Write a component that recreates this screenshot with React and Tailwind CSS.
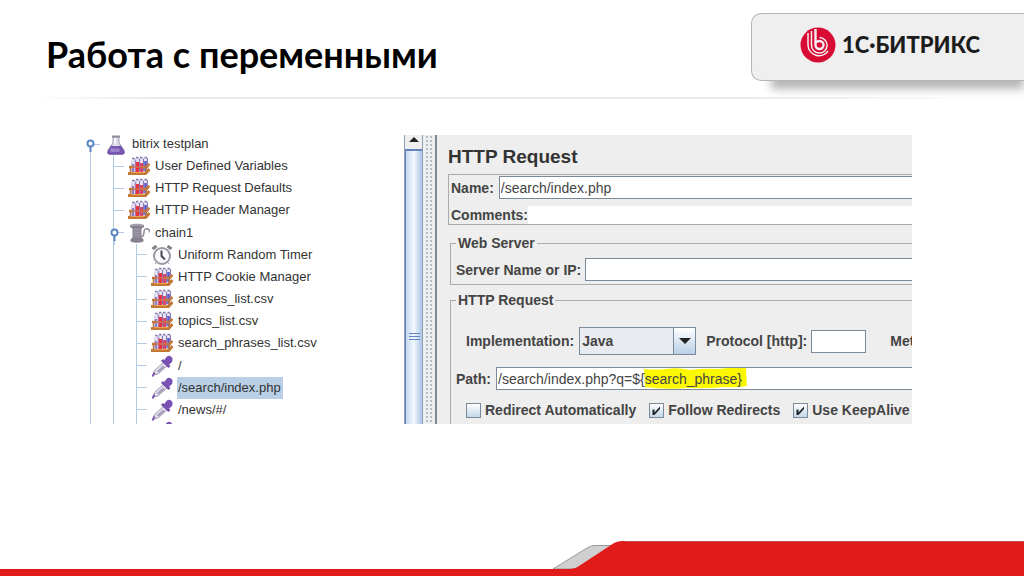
import React from "react";

const TREE = [
  { depth: 1, icon: "tubes", label: "User Defined Variables" },
  { depth: 1, icon: "tubes", label: "HTTP Request Defaults" },
  { depth: 1, icon: "tubes", label: "HTTP Header Manager" },
  { depth: 1, icon: "spool", label: "chain1", open: true },
  { depth: 2, icon: "timer", label: "Uniform Random Timer" },
  { depth: 2, icon: "tubes", label: "HTTP Cookie Manager" },
  { depth: 2, icon: "tubes", label: "anonses_list.csv" },
  { depth: 2, icon: "tubes", label: "topics_list.csv" },
  { depth: 2, icon: "tubes", label: "search_phrases_list.csv" },
  { depth: 2, icon: "pipette", label: "/" },
  { depth: 2, icon: "pipette", label: "/search/index.php", selected: true },
  { depth: 2, icon: "pipette", label: "/news/#/" },
];

function FlaskIcon() {
  return (
    <svg viewBox="0 0 22 20" className="h-5 w-[22px]">
      <path d="M8 2v6L3 15q-1.500 4 1.500 4.500h13q3-.5 1.500-4.500L14 8V2z" fill="#dedde8" stroke="#a3a1b3" />
      <path d="M6 10.500q5 1.500 10 0l3 5q1.500 3.500-1.500 4h-13q-3-.5-1.500-4z" fill="#7455b0" />
      <path d="M6 12.500q4 2 8 .5l1 3.500q-5 1.500-10 0z" fill="#9c84cd" />
      <path d="M7 1.500h8" stroke="#8d8c98" strokeWidth="2" />
      <path d="M10 3v6" stroke="#fff" strokeWidth="1.500" />
    </svg>
  );
}

function TubesIcon() {
  return (
    <svg viewBox="0 0 22 20" className="h-5 w-[22px]">
      <path d="M3 5l3-3h13v14H3z" fill="#d3cce4" />
      <path d="M5.500 4v11M9.500 3v12M13.500 3v12M17.500 3v12" stroke="#efebf6" strokeWidth="2" />
      <path d="M7.500 4v12" stroke="#9e8fc4" strokeWidth="1.500" />
      <path d="M5 8v8" stroke="#8b7fc6" strokeWidth="2" />
      <path d="M9.500 6v10" stroke="#e8323f" strokeWidth="3.500" />
      <path d="M13.500 7v9" stroke="#d8486d" strokeWidth="3" />
      <path d="M17.500 5v10" stroke="#5a58c8" strokeWidth="2.500" />
      <path d="M11.500 3v12M15.500 3v12M19.500 2v10" stroke="#857bb4" />
      <path d="M4 2.500h2.500M8 1.500h2.500M12 1.500h2.500M16.500 1.500H19" stroke="#857dae" strokeWidth="1.500" />
      <path d="M1 11h4M15 11h3.500l3-3" stroke="#c77a36" strokeWidth="2.500" fill="none" />
      <path d="M5 11h10" stroke="#d07050" strokeWidth="1.500" />
      <path d="M0 17.500h17.500l4-4.500" stroke="#c47833" strokeWidth="3" fill="none" />
      <path d="M1.500 16.500h15" stroke="#e9a552" />
      <path d="M2.500 10v7M18 10v7" stroke="#b9744a" strokeWidth="1.500" />
    </svg>
  );
}

function SpoolIcon() {
  return (
    <svg viewBox="0 0 22 20" className="h-5 w-[22px]">
      <path d="M2 2q7-2.500 14 0v2l-2.500 1.500v9l2 2v2q-7 2.500-13 0v-2l2-2v-9L2 4z" fill="#85808e" />
      <path d="M5.500 5.500h7v9h-7z" fill="#9b95a6" />
      <path d="M5.500 8h7M5.500 10.500h7M5.500 13h7" stroke="#8a8496" />
      <path d="M3 2.500q6-1.500 12 0" fill="none" stroke="#bcb9c2" />
      <path d="M13 14q3-1 3-5t4-3q2 1 1.500 3.500" fill="none" stroke="#8d8896" strokeWidth="1.500" />
    </svg>
  );
}

function TimerIcon() {
  return (
    <svg viewBox="0 0 22 20" className="h-5 w-[22px]">
      <path d="M1.500 4l4-3M16.500 1l4 3" stroke="#84828c" strokeWidth="3" />
      <path d="M4 3l3 3M18 3l-3 3M6 17l-2 2M16 17l2 2" stroke="#9a99a3" />
      <circle cx="11" cy="11" r="8" fill="#fbfbfd" stroke="#9b99a5" strokeWidth="2" />
      <path d="M10.500 5.500V11l3.500 3.500" fill="none" stroke="#4a4858" strokeWidth="2" />
    </svg>
  );
}

function PipetteIcon() {
  return (
    <svg viewBox="0 0 22 22" className="h-[22px] w-[22px]">
      <path d="M2 20l2-5 9-8 3.500 3.500L7 19z" fill="#e3e1ea" stroke="#a29fad" />
      <path d="M5.500 16.500l6.500-6 2 2-6 5z" fill="#a9a0c0" />
      <path d="M1.500 21.500l2-4" stroke="#7c56b5" strokeWidth="2" />
      <path d="M11 5l7.500 7" stroke="#7350ad" strokeWidth="3" />
      <path d="M12.500 6l3-4q3-2.500 5.500.5 1.500 3-1 5.500L17 10.500z" fill="#7951b3" />
    </svg>
  );
}

const ICONS = {
  flask: FlaskIcon,
  tubes: TubesIcon,
  spool: SpoolIcon,
  timer: TimerIcon,
  pipette: PipetteIcon,
};

function Handle() {
  return (
    <svg viewBox="0 0 9 14" className="absolute top-1/2 -left-1 h-[14px] w-[9px] -translate-y-1 overflow-visible">
      <path d="M4.500 6v10" stroke="#b4cbe6" />
      <path d="M4.500 6v6" stroke="#5d87c4" strokeWidth="2" />
      <circle cx="4.500" cy="3.500" r="3" fill="#fff" stroke="#5d87c4" strokeWidth="2" />
    </svg>
  );
}

function TreeRow({ depth, icon, label, open, selected }) {
  const Icon = ICONS[icon];
  return (
    <li className="flex items-stretch">
      {Array.from({ length: depth }, (_, i) => (
        <span key={i} className="w-[23px] shrink-0 border-l border-[#b4cbe6]" />
      ))}
      <span className="relative flex w-[15px] shrink-0 items-center border-l border-[#b4cbe6]">
        <span className="h-px w-[10px] bg-[#b4cbe6]" />
        {open && <Handle />}
      </span>
      <span className="flex w-[22px] shrink-0 items-center">
        <Icon />
      </span>
      <span
        className={
          selected
            ? "ml-1 flex items-center bg-[#b8cfe5] pr-[2px] pl-px whitespace-nowrap"
            : "ml-[5px] flex items-center whitespace-nowrap"
        }
      >
        {label}
      </span>
    </li>
  );
}

function TestPlanTree() {
  return (
    <div className="flex w-[324px] shrink-0 flex-col overflow-hidden pl-[10px] text-[13px] leading-4 text-[#333]">
      <div className="flex h-5 shrink-0 items-stretch">
        <span className="relative mb-[2px] flex w-[15px] shrink-0 items-center">
          <span className="h-px w-[10px] bg-[#b4cbe6]" />
          <Handle />
        </span>
        <span className="flex w-[22px] items-center">
          <FlaskIcon />
        </span>
        <span className="mb-[2px] ml-[5px] flex items-center">bitrix testplan</span>
      </div>
      <ul className="grid h-[266px] shrink-0 auto-rows-fr">
        {TREE.map((node) => (
          <TreeRow key={node.label} {...node} />
        ))}
      </ul>
      <ul className="h-[22px] shrink-0">
        <TreeRow depth={2} icon="pipette" label="" />
      </ul>
    </div>
  );
}

function Scrollbar() {
  return (
    <div className="flex w-[19px] shrink-0 flex-col border-x border-[#8ea0b8] bg-[#eee]">
      <button type="button" aria-label="Scroll up" className="flex h-[14px] items-start justify-center pt-[2px]">
        <svg viewBox="0 0 10 5" className="h-[5px] w-[10px]">
          <path d="M0 5l5-5 5 5z" fill="#222" />
        </svg>
      </button>
      <div className="flex flex-1 flex-col items-center border-t-2 border-l border-[#6382bf] bg-linear-to-r from-[#c4d8ef] via-[#f3f8fd] to-[#a9c4e4] pt-[182px]">
        <div className="h-px w-[11px] bg-[#6382bf]" />
        <div className="mt-[2px] h-px w-[11px] bg-[#6382bf]" />
        <div className="mt-[2px] h-px w-[11px] bg-[#6382bf]" />
      </div>
    </div>
  );
}

function CheckOption({ label, checked }) {
  return (
    <label className="flex items-center gap-1">
      <span className="relative flex">
        <input
          type="checkbox"
          defaultChecked={checked}
          className="peer h-[15px] w-[15px] appearance-none border border-[#7a8a99] bg-linear-to-b from-white to-[#c3d7ea]"
        />
        <svg viewBox="0 0 15 15" className="pointer-events-none absolute inset-0 hidden peer-checked:block">
          <path d="M3.500 6.500h2v3l5.500-6v2.500l-5.500 6h-2z" fill="#222" />
        </svg>
      </span>
      {label}
    </label>
  );
}

function RequestPanel() {
  const field = "h-[23px] border border-[#7a8a99] bg-white px-px text-[14px] font-normal text-[#444] outline-none";
  return (
    <section className="min-w-0 flex-1 overflow-hidden border-l-2 border-[#7a8a99] bg-[#eee] pl-[11px] text-[14px] leading-4 font-bold whitespace-nowrap text-[#444]">
      <h2 className="mt-[10px] text-[19px] leading-6 text-[#333]">HTTP Request</h2>
      <div className="mt-[5px] border-y border-l border-[#aaa]">
        <div className="flex items-center gap-[5px] pt-px pl-[2px]">
          <label htmlFor="name">Name:</label>
          <input id="name" defaultValue="/search/index.php" className={`${field} min-w-0 flex-1 border-r-0`} />
        </div>
        <div className="mt-[7px] flex items-center pl-[2px]">
          <label htmlFor="comments">Comments:</label>
          <input id="comments" className="h-[18px] min-w-0 flex-1 bg-white outline-none" />
        </div>
      </div>

      <fieldset className="mt-[10px] ml-[2px] h-[50px] border border-r-0 border-[#aaa] pl-[5px]">
        <legend className="px-[2px]">Web Server</legend>
        <div className="mt-[7px] flex items-center gap-1">
          <label htmlFor="server">Server Name or IP:</label>
          <input id="server" className={`${field} min-w-0 flex-1 border-r-0`} />
        </div>
      </fieldset>

      <fieldset className="mt-[7px] ml-[2px] h-40 border border-r-0 border-[#aaa] pl-[5px]">
        <legend className="px-[2px]">HTTP Request</legend>
        <div className="mt-[19px] flex items-center pl-[10px]">
          <label htmlFor="impl">Implementation:</label>
          <div className="relative ml-[5px]">
            <select
              id="impl"
              className="block h-7 w-[117px] appearance-none border border-[#7a8a99] bg-[#e8ebf0] px-[2px] font-bold"
            >
              <option>Java</option>
            </select>
            <span className="pointer-events-none absolute inset-y-0 right-0 flex w-[23px] items-center justify-center border border-[#7a8a99] bg-linear-to-b from-white to-[#b8cfe5]">
              <svg viewBox="0 0 12 6" className="h-[6px] w-3">
                <path d="M0 0h12L6 6z" fill="#222" />
              </svg>
            </span>
          </div>
          <label htmlFor="protocol" className="ml-[10px]">Protocol [http]:</label>
          <input id="protocol" className={`${field} ml-1 w-[55px] shrink-0`} />
          <span className="ml-6">Met</span>
        </div>
        <div className="mt-3 flex items-center gap-[5px]">
          <label htmlFor="path">Path:</label>
          <div className="relative flex min-w-0 flex-1 bg-white">
            <svg viewBox="0 0 104 24" className="absolute top-0 left-[148px] h-6 w-[104px]">
              <path d="M0 2q10 1 22 0 12-2 24 1 14-2 28-1 16-2 28-1l1 18q-10 2-24 1-16 2-34 1-22 2-44-1z" fill="#fcf800" />
            </svg>
            <input
              id="path"
              defaultValue="/search/index.php?q=${search_phrase}"
              className="relative h-[23px] w-full border border-r-0 border-[#7a8a99] bg-transparent px-px text-[14px] font-normal text-[#444] outline-none"
            />
          </div>
        </div>
        <div className="mt-3 flex items-center gap-[13px] pl-[10px]">
          <CheckOption label="Redirect Automatically" />
          <CheckOption label="Follow Redirects" checked />
          <CheckOption label="Use KeepAlive" checked />
        </div>
      </fieldset>
    </section>
  );
}

function BrandPanel() {
  return (
    <div className="relative mt-[13px] w-[273px] shrink-0">
      <div className="absolute right-0 bottom-0 left-5 h-4 translate-y-2 bg-[#b4b4b4] blur-[5px]" />
      <div className="relative flex h-[68px] items-center rounded-l-[10px] border border-r-0 border-[#b5b5b5] bg-[#efefef] pb-1 pl-12">
        <svg viewBox="0 0 36 36" className="h-9 w-9" role="img" aria-label="1C-Bitrix">
          <circle cx="18" cy="18" r="17.500" fill="#d80b35" />
          <g fill="none" stroke="#f6eef0" strokeWidth="1.500">
            <path d="M8 6v12a11 11 0 0 0 20 6" />
            <path d="M11.500 4v14a7.800 7.800 0 1 0 8-7.500" />
          </g>
          <path d="M15.500 2v16a4 4 0 1 0 4-4q-2 0-3.500 1.500" fill="none" stroke="#f6eef0" strokeWidth="2.400" />
        </svg>
        <span className="ml-[6px] font-[Lato] text-[22px] leading-7 font-black text-[#1c1c1c]">1С·БИТРИКС</span>
      </div>
    </div>
  );
}

export default function App() {
  return (
    <div className="flex min-h-screen flex-col overflow-hidden bg-white font-['Liberation_Sans',Arial,sans-serif]">
      <header className="flex items-start justify-between">
        <h1 className="mt-8 ml-[46px] font-[Lato,Carlito,sans-serif] text-[36px] leading-[44px] font-bold text-black">
          Работа с переменными
        </h1>
        <BrandPanel />
      </header>
      <div className="mx-8 mt-4 h-[2px] bg-[linear-gradient(to_right,white,#ebebeb_12%,#ebebeb_75%,white)]" />

      <main className="mt-9 mr-28 ml-20 flex h-[289px] overflow-hidden">
        <TestPlanTree />
        <Scrollbar />
        <div className="w-3 shrink-0 bg-[#eee] px-[2px]">
          <div className="h-full bg-[radial-gradient(#b4bcc8_1px,transparent_1px)] bg-size-[4px_4px]" />
        </div>
        <RequestPanel />
      </main>

      <footer className="mt-auto flex h-[35px] items-end">
        <div className="h-[7px] w-[54%] bg-[#e11b1a]" />
        <svg viewBox="0 0 72 35" className="h-[35px] w-[72px] shrink-0">
          <path d="M0 28L34 7q3-2 7-2.500h20L45 28z" fill="#d0d0d0" stroke="#999" />
          <path d="M0 28h16q6 0 10-3L58 4q5-4 12-4h2v35H0z" fill="#e11b1a" />
        </svg>
        <div className="h-full flex-1 border-t border-[#b55] bg-[#e11b1a]" />
      </footer>
    </div>
  );
}
